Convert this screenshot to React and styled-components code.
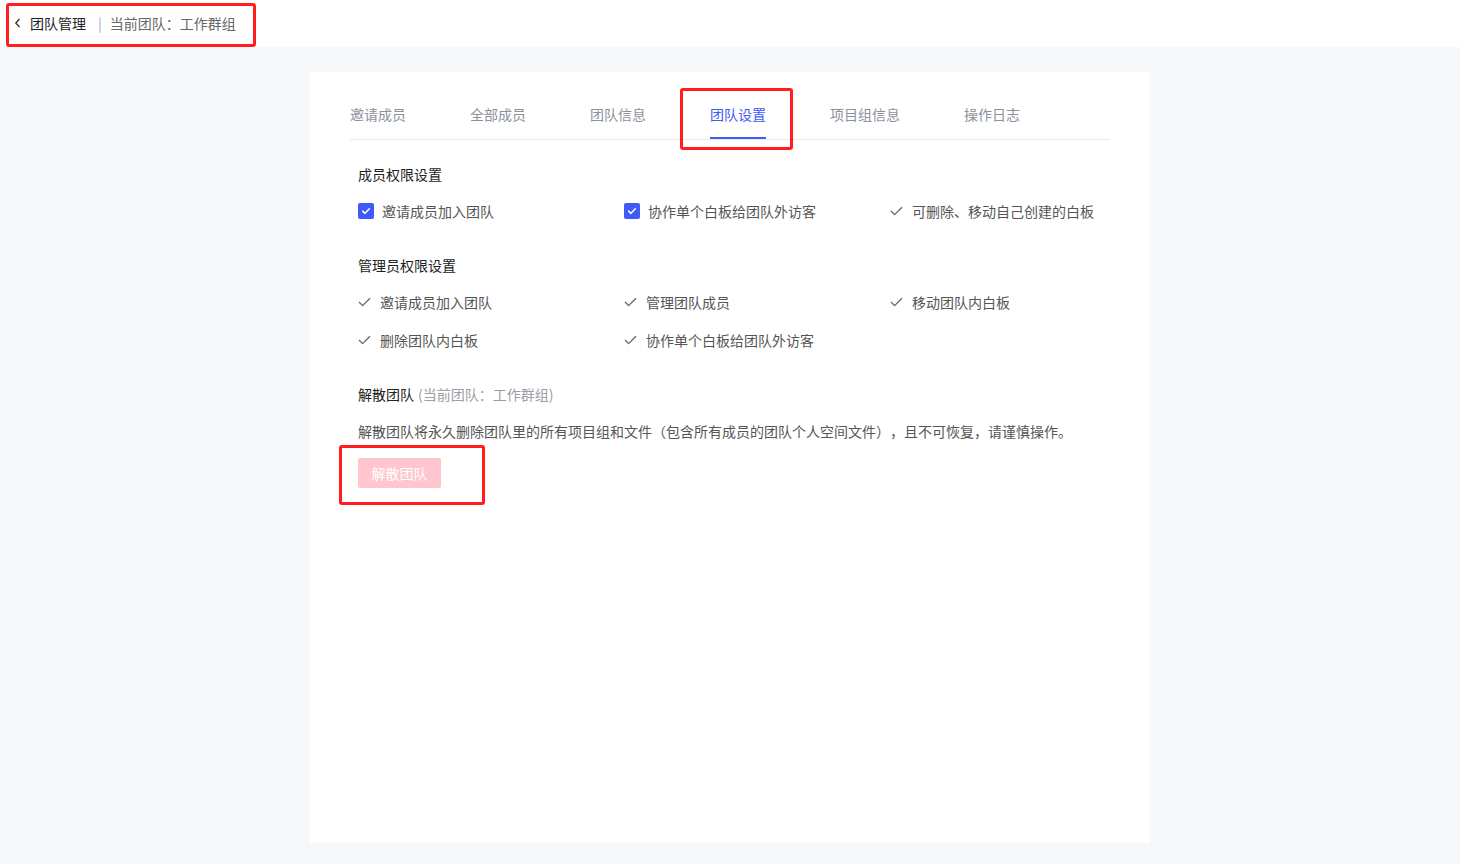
import React from "react";
import styled, { createGlobalStyle } from "styled-components";

const GlobalStyle = createGlobalStyle`
  html, body {
    margin: 0;
    padding: 0;
    height: 100%;
  }
  body {
    font-family: "Noto Sans CJK SC", "Noto Sans", "Liberation Sans", sans-serif;
    font-size: 14px;
    color: #333;
    background: #f7f8fa;
    text-spacing-trim: space-all;
  }
  #root {
    min-height: 100%;
  }
`;

const Page = styled.div`
  display: flex;
  flex-direction: column;
  height: 864px;
  background: #f7f8fa;
`;

const Header = styled.header`
  height: 47px;
  flex-shrink: 0;
  background: #fff;
  display: flex;
  align-items: center;
  padding-left: 14px;
`;

const Breadcrumb = styled.div`
  position: relative;
  display: flex;
  align-items: center;
  line-height: 22px;
  margin-top: -2px;

  &::after {
    content: "";
    position: absolute;
    left: -8px;
    right: -20px;
    top: -9px;
    bottom: -13px;
    border: 3px solid #ff1d1d;
    border-radius: 3px;
    pointer-events: none;
  }
`;

const BackIcon = styled.span`
  display: flex;
  align-items: center;
  width: 16px;
  color: #333;
`;

const Crumb = styled.span`
  color: ${(p) => (p.$muted ? "#666" : "#222")};
`;

const Divider = styled.span`
  color: #9fb0c8;
  margin: 0 8px 0 12px;
`;

const Main = styled.main`
  flex: 1;
  display: flex;
  justify-content: center;
  padding: 25px 0 21px;
`;

const Card = styled.section`
  width: 840px;
  background: #fff;
  padding: 31px 40px 0;
  box-sizing: border-box;
`;

const TabBar = styled.nav`
  display: flex;
  gap: 64px;
  border-bottom: 1px solid #e6e8ec;
`;

const Tab = styled.div`
  position: relative;
  line-height: 22px;
  padding-bottom: 14px;
  color: ${(p) => (p.$active ? "#3f5af6" : "#8b919c")};

  &::before {
    content: "";
    display: ${(p) => (p.$active ? "block" : "none")};
    position: absolute;
    left: 0;
    right: 0;
    bottom: 0;
    height: 2px;
    background: #3f5af6;
  }

  &::after {
    content: "";
    display: ${(p) => (p.$marked ? "block" : "none")};
    position: absolute;
    left: -30px;
    right: -27px;
    top: -15px;
    bottom: -11px;
    border: 3px solid #ff1d1d;
    border-radius: 3px;
  }
`;

const Content = styled.div`
  padding: 23px 8px 0;
`;

const Section = styled.div`
  & + & {
    margin-top: 32px;
  }
`;

const SectionTitle = styled.div`
  line-height: 22px;
  color: #222;
`;

const SubNote = styled.span`
  color: #9a9ea6;
  margin-left: 4px;
`;

const OptionGrid = styled.div`
  display: grid;
  grid-template-columns: repeat(3, 266px);
  row-gap: 16px;
  margin-top: 15px;
`;

const Option = styled.div`
  display: flex;
  align-items: center;
  line-height: 22px;
  color: #555;
`;

const CheckBox = styled.span`
  width: 16px;
  height: 16px;
  border-radius: 2px;
  background: #3f5af6;
  display: flex;
  align-items: center;
  justify-content: center;
  margin-right: 8px;
`;

const Tick = styled.span`
  width: 14px;
  display: flex;
  align-items: center;
  margin-right: 8px;
  color: #666;
`;

const Description = styled.p`
  margin: 15px 0 0;
  line-height: 22px;
  color: #555;
`;

const ButtonWrap = styled.div`
  position: relative;
  display: inline-block;
  margin-top: 16px;

  &::after {
    content: "";
    position: absolute;
    left: -19px;
    right: -44px;
    top: -13px;
    bottom: -17px;
    border: 3px solid #ff1d1d;
    border-radius: 3px;
    pointer-events: none;
  }
`;

const DangerButton = styled.button`
  display: block;
  width: 83px;
  height: 30px;
  border: none;
  border-radius: 2px;
  background: #ffc6cf;
  color: #fff;
  font-family: inherit;
  font-size: 14px;
  cursor: not-allowed;
`;

const CheckMark = ({ color = "#fff", size = 10 }) => (
  <svg width={size} height={size} viewBox="0 0 12 12" fill="none">
    <path d="M2 6.2l2.8 2.6L10 3.4" stroke={color} strokeWidth="1.8" strokeLinecap="round" strokeLinejoin="round" />
  </svg>
);

const GrayTick = () => (
  <svg width="13" height="10" viewBox="0 0 13 10" fill="none">
    <path d="M1 5l3.6 3.6L12 1.2" stroke="#666" strokeWidth="1.3" strokeLinejoin="round" />
  </svg>
);

const tabs = ["邀请成员", "全部成员", "团队信息", "团队设置", "项目组信息", "操作日志"];

const memberOptions = [
  { label: "邀请成员加入团队", checked: true },
  { label: "协作单个白板给团队外访客", checked: true },
  { label: "可删除、移动自己创建的白板", checked: false },
];

const adminOptions = [
  "邀请成员加入团队",
  "管理团队成员",
  "移动团队内白板",
  "删除团队内白板",
  "协作单个白板给团队外访客",
];

export default function App() {
  return (
    <Page>
      <GlobalStyle />
      <Header>
        <Breadcrumb>
          <BackIcon>
            <svg width="8" height="10" viewBox="0 0 8 10" fill="none">
              <path d="M5.5 1L1.8 5l3.7 4" stroke="#333" strokeWidth="1.3" />
            </svg>
          </BackIcon>
          <Crumb>团队管理</Crumb>
          <Divider>|</Divider>
          <Crumb $muted>当前团队：工作群组</Crumb>
        </Breadcrumb>
      </Header>
      <Main>
        <Card>
          <TabBar>
            {tabs.map((t) => (
              <Tab key={t} $active={t === "团队设置"} $marked={t === "团队设置"}>
                {t}
              </Tab>
            ))}
          </TabBar>
          <Content>
            <Section>
              <SectionTitle>成员权限设置</SectionTitle>
              <OptionGrid>
                {memberOptions.map((o) => (
                  <Option key={o.label}>
                    {o.checked ? (
                      <CheckBox>
                        <CheckMark />
                      </CheckBox>
                    ) : (
                      <Tick>
                        <GrayTick />
                      </Tick>
                    )}
                    {o.label}
                  </Option>
                ))}
              </OptionGrid>
            </Section>
            <Section>
              <SectionTitle>管理员权限设置</SectionTitle>
              <OptionGrid>
                {adminOptions.map((o) => (
                  <Option key={o}>
                    <Tick>
                      <GrayTick />
                    </Tick>
                    {o}
                  </Option>
                ))}
              </OptionGrid>
            </Section>
            <Section>
              <SectionTitle>
                解散团队<SubNote>(当前团队：工作群组)</SubNote>
              </SectionTitle>
              <Description>
                解散团队将永久删除团队里的所有项目组和文件（包含所有成员的团队个人空间文件），且不可恢复，请谨慎操作。
              </Description>
              <ButtonWrap>
                <DangerButton disabled>解散团队</DangerButton>
              </ButtonWrap>
            </Section>
          </Content>
        </Card>
      </Main>
    </Page>
  );
}
